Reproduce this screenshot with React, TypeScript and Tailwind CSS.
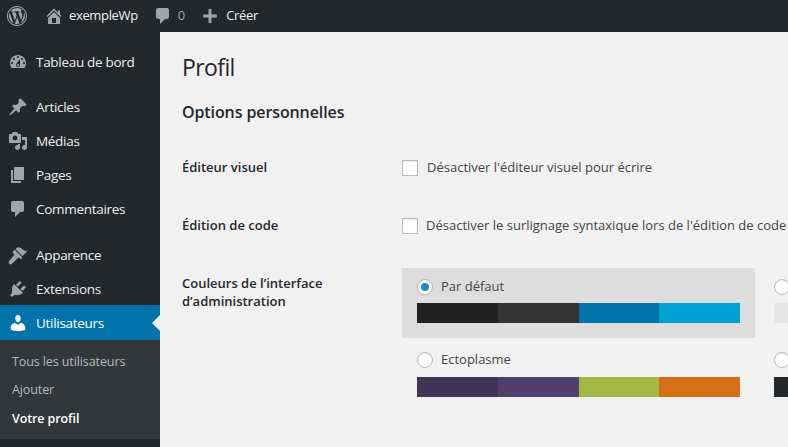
import type { ReactNode } from "react";

const font = "font-['Open_Sans','Noto_Sans',sans-serif]";

const paths = {
  wp: "M20 10c0-5.52-4.48-10-10-10S0 4.48 0 10s4.48 10 10 10 10-4.48 10-10zM10 1.01c4.97 0 8.99 4.02 8.99 8.99s-4.02 8.99-8.99 8.99S1.01 14.97 1.01 10 5.03 1.01 10 1.01zM8.01 14.82L4.96 6.61c.49-.03 1.05-.08 1.05-.08.43-.05.38-1.01-.06-.99 0 0-1.29.1-2.13.1-.15 0-.33 0-.52-.01 1.44-2.17 3.9-3.6 6.7-3.6 2.09 0 3.99.79 5.41 2.09-.6-.08-1.45.35-1.45 1.42 0 .66.38 1.22.79 1.88.31.54.5 1.22.5 2.21 0 1.34-1.27 4.48-1.27 4.48l-2.71-7.5c.48-.03.75-.16.75-.16.43-.05.38-1.1-.05-1.08 0 0-1.3.11-2.14.11-.78 0-2.11-.11-2.11-.11-.43-.02-.48 1.06-.05 1.08l.84.08 1.12 3.04zm6.02 2.15L16.64 10s.67-1.69.39-3.81c.63 1.14.94 2.42.94 3.81 0 2.96-1.56 5.58-3.94 6.97zM2.68 6.77L6.5 17.25c-2.67-1.3-4.47-4.08-4.47-7.25 0-1.16.2-2.23.65-3.23zm7.45 4.53l2.29 6.25c-.75.27-1.57.42-2.42.42-.72 0-1.41-.11-2.06-.3z",
  home: "M16 8.5l1.53 1.53-1.06 1.06L10 4.62l-6.47 6.47-1.06-1.06L10 2.5l4 4v-2h2v4zm-6-2.46l6 5.99V18H4v-5.97zM12 17v-5H8v5h4z",
  comment: "M5 2h9c1.1 0 2 .9 2 2v7c0 1.1-.9 2-2 2h-2l-5 5v-5H5c-1.1 0-2-.9-2-2V4c0-1.1.9-2 2-2z",
  plus: "M17 8.5v3h-5.5V17h-3v-5.5H3v-3h5.5V3h3v5.5z",
  dashboard: "M3.76 16h12.48c1.1-1.37 1.76-3.11 1.76-5 0-4.42-3.58-8-8-8s-8 3.58-8 8c0 1.89.66 3.63 1.76 5zM10 4c.55 0 1 .45 1 1s-.45 1-1 1-1-.45-1-1 .45-1 1-1zM6 6c.55 0 1 .45 1 1s-.45 1-1 1-1-.45-1-1 .45-1 1-1zm8 0c.55 0 1 .45 1 1s-.45 1-1 1-1-.45-1-1 .45-1 1-1zm-5.37 5.55L12 7v6c0 1.1-.9 2-2 2s-2-.9-2-2c0-.57.24-1.08.63-1.45zM4 10c.55 0 1 .45 1 1s-.45 1-1 1-1-.45-1-1 .45-1 1-1zm12 0c.55 0 1 .45 1 1s-.45 1-1 1-1-.45-1-1 .45-1 1-1zm-5 3c0-.55-.45-1-1-1s-1 .45-1 1 .45 1 1 1 1-.45 1-1z",
  pin: "M10.44 3.02l1.82-1.82 6.36 6.35-1.83 1.82c-1.05-.68-2.48-.57-3.41.36l-.75.75c-.92.93-1.04 2.35-.35 3.41l-1.83 1.82-2.41-2.41-2.8 2.79c-.42.42-3.38 2.71-3.8 2.29s1.86-3.39 2.28-3.81l2.79-2.79L4.1 9.36l1.83-1.82c1.05.69 2.48.57 3.4-.36l.75-.75c.93-.92 1.05-2.35.36-3.41z",
  media: "M13 11V4c0-.55-.45-1-1-1h-1.67L9 1H5L3.67 3H2c-.55 0-1 .45-1 1v7c0 .55.45 1 1 1h10c.55 0 1-.45 1-1zM7 4.5c1.38 0 2.5 1.12 2.5 2.5S8.38 9.5 7 9.5 4.5 8.38 4.5 7 5.62 4.5 7 4.5zM14 6h5v10.5c0 1.38-1.12 2.5-2.5 2.5S14 17.88 14 16.5s1.12-2.5 2.5-2.5c.17 0 .34.02.5.05V9h-3V6zm-4 8.05V13h2v3.5c0 1.38-1.12 2.5-2.5 2.5S7 17.88 7 16.5 8.12 14 9.5 14c.17 0 .34.02.5.05z",
  page: "M6 15V2h10v13H6zm-1 1h8v2H3V5h2v11z",
  brush: "M14.48 11.06L7.41 3.99l1.5-1.5c.5-.56 2.3-.47 3.51.32 1.21.8 1.43 1.28 2.91 2.1 1.18.64 2.45 1.26 4.45.85zm-.71.71L6.7 4.7 4.93 6.47c-.39.39-.39 1.02 0 1.41l1.06 1.06c.39.39.39 1.03 0 1.42L1 16.3c-.6.6-.6 1.5 0 2.1l.6.6c.6.6 1.5.6 2.1 0l6.34-6.06c.39-.39 1.03-.39 1.42 0l.9.9c.39.39 1.02.39 1.41 0z",
  plug: "M13.11 4.36L9.87 7.6 8 5.73l3.24-3.24c.35-.34 1.05-.2 1.56.32.52.51.66 1.21.31 1.55zm-8 1.77l.91-1.12 9.01 9.01-1.19.84c-.71.71-2.63 1.16-3.82 1.16H6.14L4.9 17.26c-.59.59-1.54.59-2.12 0-.59-.58-.59-1.53 0-2.12l1.24-1.24v-3.88c0-1.13.4-3.19 1.09-3.89zm7.26 3.97l3.24-3.24c.34-.35 1.04-.21 1.55.31.52.51.66 1.21.31 1.55l-3.24 3.25z",
  users: "M10 9.25c-2.27 0-2.73-3.44-2.73-3.44C7 4.02 7.82 2 9.97 2c2.16 0 2.98 2.02 2.71 3.81 0 0-.41 3.44-2.68 3.44zm0 2.57L12.72 10c2.39 0 4.52 2.33 4.52 4.53v2.49s-3.65 1.13-7.24 1.13c-3.65 0-7.24-1.13-7.24-1.13v-2.49c0-2.25 1.94-4.48 4.47-4.48z",
};

function Icon({ d, className }: { d: string; className: string }) {
  return (
    <svg viewBox="0 0 20 20" fill="currentColor" className={className}>
      <path d={d} />
    </svg>
  );
}

function TopBar() {
  return (
    <div className="flex h-8 shrink-0 items-center bg-[#23282d] text-[13px] text-[#eee]">
      <Icon d={paths.wp} className="ml-[7px] size-5 text-[#a0a5aa]" />
      <Icon d={paths.home} className="ml-[17px] size-5 text-[#a0a5aa]" />
      <span className="ml-[5px] font-[500] tracking-[-0.35px]">exempleWp</span>
      <Icon d={paths.comment} className="ml-[15px] size-5 text-[#a0a5aa]" />
      <span className="ml-[5px] text-[#a0a5aa]">0</span>
      <Icon d={paths.plus} className="ml-[15px] size-5 text-[#a0a5aa]" />
      <span className="ml-[6px] tracking-[-0.35px]">Créer</span>
    </div>
  );
}

function MenuItem({ icon, label, active }: { icon: string; label: string; active?: boolean }) {
  return (
    <div className={`relative flex items-center ${active ? "-mt-px h-[35px] bg-[#0073aa] pt-px text-white" : "h-[34px] text-[#eee]"}`}>
      <Icon d={icon} className={`ml-2 size-5 ${active ? "text-white" : "text-[#a0a5aa]"}`} />
      <span className="ml-2 text-[13.5px] tracking-[-0.3px]">{label}</span>
      {active && (
        <div className="absolute right-0 top-1/2 size-0 -translate-y-1/2 border-y-[8px] border-r-[8px] border-y-transparent border-r-[#f1f1f1]" />
      )}
    </div>
  );
}

function Sidebar() {
  return (
    <div className="flex w-[160px] shrink-0 flex-col bg-[#23282d] pt-[13px]">
      <MenuItem icon={paths.dashboard} label="Tableau de bord" />
      <div className="h-[11px]" />
      <MenuItem icon={paths.pin} label="Articles" />
      <MenuItem icon={paths.media} label="Médias" />
      <MenuItem icon={paths.page} label="Pages" />
      <MenuItem icon={paths.comment} label="Commentaires" />
      <div className="h-[12px]" />
      <MenuItem icon={paths.brush} label="Apparence" />
      <MenuItem icon={paths.plug} label="Extensions" />
      <MenuItem icon={paths.users} label="Utilisateurs" active />
      <div className="flex h-[99px] flex-col bg-[#32373c] pl-3 pt-[8px] text-[12.5px] tracking-[-0.1px] text-[#b4b9be]">
        <div className="flex h-[28px] items-center">Tous les utilisateurs</div>
        <div className="flex h-[28px] items-center">Ajouter</div>
        <div className="mt-px flex h-[29px] items-center font-semibold text-white">Votre profil</div>
      </div>
    </div>
  );
}

function Row({ label, className, children }: { label: ReactNode; className: string; children: ReactNode }) {
  return (
    <div className={`flex ${className}`}>
      <div className="w-[220px] shrink-0 text-[13px] leading-[18px] font-semibold text-[#23282d]">{label}</div>
      {children}
    </div>
  );
}

function Check({ label, gap }: { label: string; gap: string }) {
  return (
    <div className="mt-[2px] flex h-4 items-center">
      <div className="size-4 shrink-0 border border-[#b4b9be] bg-white shadow-[inset_0_1px_2px_rgba(0,0,0,0.07)]" />
      <span className={`whitespace-nowrap text-[13px] text-[#444] ${gap}`}>{label}</span>
    </div>
  );
}

function Radio({ on }: { on?: boolean }) {
  return (
    <div className="flex size-4 shrink-0 items-center justify-center rounded-full border border-[#b4b9be] bg-white shadow-[inset_0_1px_2px_rgba(0,0,0,0.07)]">
      {on && <div className="size-2 rounded-full bg-[#1e8cbe]" />}
    </div>
  );
}

// right-hand column: its label falls past the window edge, so only radio and bar show
function Scheme({ label, colors, selected, barGap }: { label?: string; colors: string[]; selected?: boolean; barGap: string }) {
  return (
    <div className={`h-[70px] px-[15px] pt-[11px] ${selected ? "bg-[#ddd]" : ""}`}>
      <div className="flex h-4 items-center">
        <Radio on={selected} />
        {label && <span className="ml-2 text-[13px] text-[#444]">{label}</span>}
      </div>
      <div className={`flex h-5 w-[323px] ${barGap}`}>
        {colors.map((c) => (
          <div key={c} className="flex-1" style={{ backgroundColor: c }} />
        ))}
      </div>
    </div>
  );
}

export default function App() {
  return (
    <div className={`flex h-[447px] w-[788px] flex-col overflow-hidden bg-[#f1f1f1] ${font}`}>
      <TopBar />
      <div className="flex min-h-0 flex-1">
        <Sidebar />
        <div className="min-w-0 flex-1 pl-[22px] pt-[19px]">
          <h1 className="text-[23px] leading-[32px] tracking-[-0.6px] text-[#23282d]">Profil</h1>
          <h2 className="mt-[19px] text-[16px] leading-[20px] font-semibold tracking-[-0.1px] text-[#23282d]">Options personnelles</h2>
          <Row label="Éditeur visuel" className="mt-[36px] h-[18px]">
            <Check label="Désactiver l'éditeur visuel pour écrire" gap="ml-[9px]" />
          </Row>
          <Row label="Édition de code" className="mt-[40px] h-[18px]">
            <Check label="Désactiver le surlignage syntaxique lors de l'édition de code" gap="ml-2" />
          </Row>
          <Row label={<div className="pt-[6px]">Couleurs de l’interface<br />d’administration</div>} className="mt-[34px]">
            <div className="grid shrink-0 grid-cols-[353px_353px] gap-x-[4px] gap-y-[3px]">
              <Scheme label="Par défaut" colors={["#222222", "#333333", "#0073aa", "#00a0d2"]} selected barGap="mt-2" />
              <Scheme colors={["#e5e5e5", "#999999", "#d64e07", "#04a4cc"]} barGap="mt-2" />
              <Scheme label="Ectoplasme" colors={["#413256", "#523f6d", "#a3b745", "#d46f15"]} barGap="mt-[9px]" />
              <Scheme colors={["#25282b", "#363b3f", "#69a8bb", "#e14d43"]} barGap="mt-[9px]" />
            </div>
          </Row>
        </div>
      </div>
    </div>
  );
}
